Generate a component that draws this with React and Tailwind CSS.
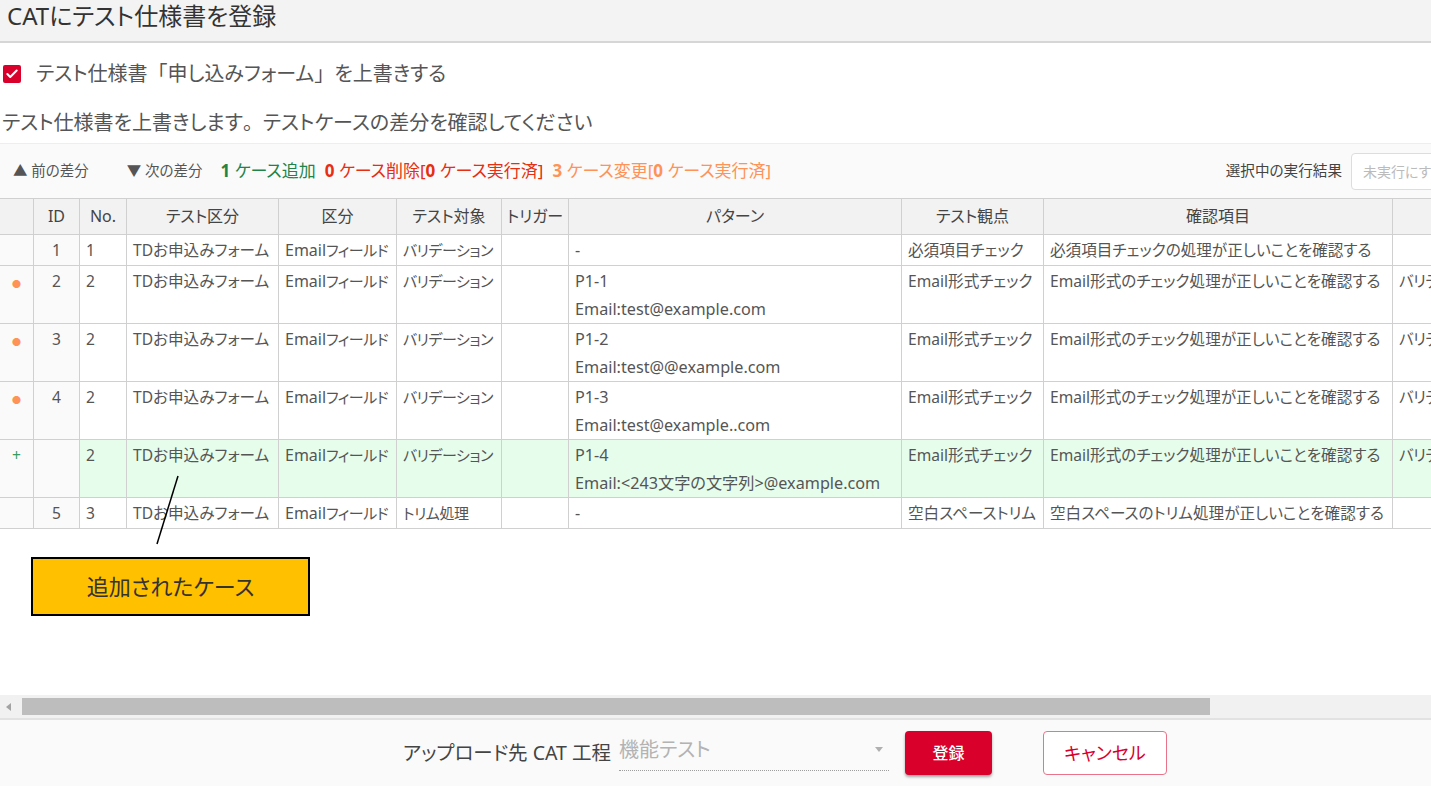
import { Check } from "lucide-react";

const columns = [
  { label: "", width: "w-[34px]" },
  { label: "ID", width: "w-[46px]" },
  { label: "No.", width: "w-[47px]" },
  { label: "テスト区分", width: "w-[152px]" },
  { label: "区分", width: "w-[118px]" },
  { label: "テスト対象", width: "w-[105px]" },
  { label: "トリガー", width: "w-[67px]" },
  { label: "パターン", width: "w-[333px]" },
  { label: "テスト観点", width: "w-[142px]" },
  { label: "確認項目", width: "w-[349px]" },
  { label: "", width: "w-[200px]" },
];

const mailCheck = "Email形式のチェック処理が正しいことを確認する";

const rows = [
  { mark: "", id: "1", no: "1", target: "バリデーション", pattern: ["-"], view: "必須項目チェック", check: "必須項目チェックの処理が正しいことを確認する", extra: "", height: "h-[31px]" },
  { mark: "●", id: "2", no: "2", target: "バリデーション", pattern: ["P1-1", "Email:test@example.com"], view: "Email形式チェック", check: mailCheck, extra: "バリデーション", height: "h-[58px]" },
  { mark: "●", id: "3", no: "2", target: "バリデーション", pattern: ["P1-2", "Email:test@@example.com"], view: "Email形式チェック", check: mailCheck, extra: "バリデーション", height: "h-[58px]" },
  { mark: "●", id: "4", no: "2", target: "バリデーション", pattern: ["P1-3", "Email:test@example..com"], view: "Email形式チェック", check: mailCheck, extra: "バリデーション", height: "h-[58px]" },
  { mark: "+", id: "", no: "2", target: "バリデーション", pattern: ["P1-4", "Email:<243文字の文字列>@example.com"], view: "Email形式チェック", check: mailCheck, extra: "バリデーション", height: "h-[58px]", added: true },
  { mark: "", id: "5", no: "3", target: "トリム処理", pattern: ["-"], view: "空白スペーストリム", check: "空白スペースのトリム処理が正しいことを確認する", extra: "", height: "h-[31px]" },
];

function Cell({ children, className = "" }) {
  return (
    <td className={`border border-[#d0d0d0] px-[6px] pt-[1px] align-top whitespace-nowrap overflow-hidden ${className}`}>
      {children}
    </td>
  );
}

// full width punctuation, the rest of the page uses proportional kana
function Punct({ children }) {
  return <span className="[font-feature-settings:normal]">{children}</span>;
}

export default function App() {
  return (
    <div className="relative flex h-[786px] w-[1431px] flex-col overflow-hidden bg-white text-[#444] font-['Noto_Sans','Noto_Sans_CJK_JP',sans-serif] [font-feature-settings:'palt']">
      {/* Header */}
      <div className="h-[43px] shrink-0 border-b-2 border-[#d6d6d6] bg-[#f3f3f3] pl-[7px] pt-[1px] text-[24px] leading-[30px] text-[#333]">
        CATにテスト仕様書を登録
      </div>

      <label className="mt-[19px] flex h-[24px] items-center pl-[3px] text-[20px] text-[#555]">
        <span className="flex h-[18px] w-[18px] items-center justify-center rounded-[2px] bg-[#d9002b] text-white">
          <Check size={14} strokeWidth={3.5} />
        </span>
        <span className="ml-[15px]">
          テスト仕様書<Punct>「</Punct>申し込みフォーム<Punct>」</Punct>を上書きする
        </span>
      </label>

      <p className="mt-[25px] h-[24px] pl-[2px] text-[20px] leading-[24px] text-[#555]">
        テスト仕様書を上書きします<Punct>。</Punct>テストケースの差分を確認してください
      </p>

      {/* Diff toolbar */}
      <div className="mt-[8px] flex h-[55px] shrink-0 items-center overflow-hidden border-t border-[#eeeeee] bg-[#fafafa] pl-[13px] text-[17px] whitespace-nowrap">
        <span className="text-[14.5px] text-[#555]">▲ 前の差分</span>
        <span className="ml-[38px] text-[14.5px] text-[#555]">▼ 次の差分</span>
        <span className="ml-[18px] text-[#1e8449]">
          <b className="font-bold">1</b> ケース追加
        </span>
        <span className="ml-[9px] text-[#e62e12]">
          <b className="font-bold">0</b> ケース削除[<b className="font-bold">0</b> ケース実行済]
        </span>
        <span className="ml-[9px] text-[#ff9257]">
          <b className="font-bold">3</b> ケース変更[<b className="font-bold">0</b> ケース実行済]
        </span>
        <span className="ml-auto text-[14.6px] text-[#444]">選択中の実行結果</span>
        <div className="ml-[9px] mr-[-60px] flex h-[37px] w-[140px] shrink-0 items-center rounded-l-[4px] border border-[#dddddd] bg-white pl-[11px] text-[14px] text-[#bbbbbb]">
          未実行にする
        </div>
      </div>

      {/* Diff table */}
      <div className="h-[497px] shrink-0 overflow-hidden">
        <table className="ml-[-1px] w-[1593px] table-fixed border-collapse text-[15.6px] leading-[28px] text-[#555]">
          <colgroup>
            {columns.map((c, i) => (
              <col key={i} className={c.width} />
            ))}
          </colgroup>
          <thead>
            <tr className="h-[36px] bg-[#f2f2f2]">
              {columns.map((c, i) => (
                <th key={i} className="border border-[#d0d0d0] pb-[2px] text-[16px] font-normal text-[#444]">
                  {c.label}
                </th>
              ))}
            </tr>
          </thead>
          <tbody>
            {rows.map((r, i) => (
              <tr key={i} className={`${r.height} ${r.added ? "bg-[#e6fdec]" : "bg-white"}`}>
                <Cell className={`bg-[#fafafa] text-center ${r.added ? "text-[#3a9a63]" : "text-[#ff9257]"}`}>
                  <span className={r.added ? "" : "text-[9px]"}>{r.mark}</span>
                </Cell>
                <Cell className="bg-[#fafafa] text-center">{r.id}</Cell>
                <Cell>{r.no}</Cell>
                <Cell>TDお申込みフォーム</Cell>
                <Cell className="text-[15px]">
                  <span className="text-[16px]">Email</span>
                  <span className="tracking-[-0.5px]">フィールド</span>
                </Cell>
                <Cell className="text-[15px] tracking-[-0.5px]">{r.target}</Cell>
                <Cell />
                <Cell className="text-[16.2px]">
                  {r.pattern.map((line) => (
                    <div key={line}>{line}</div>
                  ))}
                </Cell>
                <Cell>{r.view}</Cell>
                <Cell>{r.check}</Cell>
                <Cell className="tracking-[-0.5px]">{r.extra}</Cell>
              </tr>
            ))}
          </tbody>
        </table>
      </div>

      {/* Horizontal scrollbar */}
      <div className="flex h-[23px] shrink-0 items-center bg-[#f1f1f1]">
        <span className="ml-[6px] h-0 w-0 border-y-[4px] border-r-[5px] border-y-transparent border-r-[#a3a3a3]" />
        <span className="ml-[11px] h-[17px] w-[1188px] bg-[#bdbdbd]" />
      </div>

      {/* Footer */}
      <div className="flex flex-1 items-center border-t-2 border-[#e2e2e2] bg-[#fafafa] pl-[403px]">
        <span className="w-[208px] whitespace-nowrap text-[19.5px] text-[#444]">アップロード先 CAT 工程</span>
        <div className="ml-[8px] flex h-[36px] w-[270px] items-center justify-between border-b border-dotted border-[#9e9e9e] pb-[6px] pr-[6px] text-[20px] text-[#b3b3b3]">
          機能テスト
          <span className="h-0 w-0 border-x-[4px] border-t-[5px] border-x-transparent border-t-[#b0b0b0]" />
        </div>
        <button className="ml-[16px] h-[44px] w-[87px] rounded-[4px] bg-[#d9002b] text-[16px] font-medium text-white shadow-[0_2px_3px_rgba(0,0,0,0.35)]">
          登録
        </button>
        <button className="ml-[51px] h-[44px] w-[124px] rounded-[4px] border border-[#e8738b] bg-white text-[18px] text-[#d9002b]">
          キャンセル
        </button>
      </div>

      {/* Annotation over the table */}
      <svg className="absolute left-[150px] top-[470px] h-[80px] w-[35px]" viewBox="0 0 35 80">
        <line x1="28" y1="6" x2="7" y2="74" stroke="#000" strokeWidth="1.5" />
      </svg>
      <div className="absolute left-[31px] top-[557px] flex h-[59px] w-[279px] items-center justify-center border-2 border-black bg-[#ffc000] text-[22px] text-[#333]">
        追加されたケース
      </div>
    </div>
  );
}
